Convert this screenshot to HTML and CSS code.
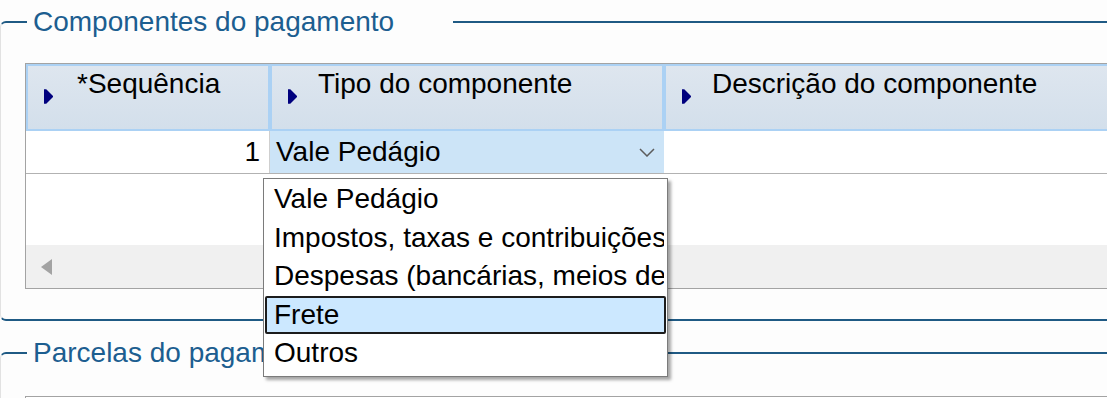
FILE: index.html
```html
<!DOCTYPE html>
<html lang="pt-BR">
<head>
  <meta charset="UTF-8" />
  <title>Componentes do pagamento</title>
  <link rel="stylesheet" href="styles.css">
</head>
<body>
  <div class="page">

    <fieldset class="group">
      <legend>Componentes do pagamento</legend>
      <div class="grid">
        <div class="grid-head">
          <div class="hcell">
            <svg class="sort" viewBox="0 0 8 13"><polygon points="0,0 2,0 8,6 8,7 2,13 0,13"/></svg>
            <span>*Sequência</span>
          </div>
          <div class="hcell">
            <svg class="sort" viewBox="0 0 8 13"><polygon points="0,0 2,0 8,6 8,7 2,13 0,13"/></svg>
            <span class="hleft">Tipo do componente</span>
          </div>
          <div class="hcell">
            <svg class="sort" viewBox="0 0 8 13"><polygon points="0,0 2,0 8,6 8,7 2,13 0,13"/></svg>
            <span class="hleft">Descrição do componente</span>
          </div>
        </div>
        <div class="grid-row">
          <div class="dcell num">1</div>
          <div class="dcell pick">
            <span>Vale Pedágio</span>
            <svg class="chev" viewBox="0 0 16 9"><polyline points="1,1 8,8 15,1"/></svg>
          </div>
          <div class="dcell"></div>
        </div>
        <div class="grid-empty"></div>
        <div class="hscroll"><span class="arrow-left"></span></div>
      </div>
    </fieldset>

    <fieldset class="group second">
      <legend>Parcelas do pagamento</legend>
      <div class="grid stub"></div>
    </fieldset>

    <!-- open list of the "Tipo do componente" select -->
    <ul class="dropdown">
      <li>Vale Pedágio</li>
      <li>Impostos, taxas e contribuições</li>
      <li>Despesas (bancárias, meios de pagamento, outras)</li>
      <li class="active">Frete</li>
      <li>Outros</li>
    </ul>

  </div>
</body>
</html>
```

FILE: styles.css
```css
html, body {
  margin: 0; padding: 0;
  background: #fdfdfd;
  font-family: 'Liberation Sans', Arial, sans-serif;
  color: #000;
  overflow: hidden;
}
.page {
  position: relative;
  height: 398px;
  padding-top: 6px;
  box-sizing: border-box;
}
.group {
  margin: 0 -60px 0 0;
  padding: 25px 0 30px 24px;
  border: 2px solid #1f5a84;
  border-left: 1px solid #e2e2e2;
  border-right: none;
  border-radius: 6px 0 0 6px;
}
.group legend {
  margin-left: 2px;
  padding: 0 59px 0 6px;
  font-size: 28px;
  line-height: 32px;
  color: #1c5e90;
}
.group.second {
  margin-top: 16px;
  padding-top: 27px;
}
.grid {
  width: 1160px;
  border: 1px solid #a3a3a3;
  border-right: none;
  background: #fff;
}
.grid.stub {
  height: 20px;
  border-bottom: none;
}
.grid-head, .grid-row {
  display: grid;
  grid-template-columns: 244px 394px 1fr;
}
.hcell {
  box-sizing: border-box;
  height: 67px;
  border: 2px solid #abd1f4;
  background: linear-gradient(#dee6ef, #d3dfeb);
  padding: 2px 0 0 16px;
  display: flex;
  align-items: flex-start;
  font-size: 28px;
  line-height: 32px;
}
.hcell .sort {
  width: 9px;
  height: 15px;
  margin: 21px 24px 0 0;
  fill: #00007e;
  flex-shrink: 0;
}
.hcell .hleft { margin-left: -3px; }
.grid-row {
  height: 43px;
  box-sizing: border-box;
  border-bottom: 1px solid #b2b2b2;
}
.dcell {
  font-size: 28px;
  line-height: 42px;
  white-space: nowrap;
}
.dcell.num {
  text-align: right;
  padding-right: 9px;
  border-right: 1px solid #cfcfcf;
}
.dcell.pick {
  background: #cce4f7;
  padding: 0 9px 0 6px;
  display: flex;
  align-items: center;
  justify-content: space-between;
}
.chev {
  width: 16px;
  height: 9px;
  fill: none;
  stroke: #5c5c5c;
  stroke-width: 1.5;
}
.grid-empty {
  height: 71px;
}
.hscroll {
  height: 43px;
  background: #f0f0f0;
  display: flex;
  align-items: center;
  padding-left: 15px;
}
.arrow-left {
  width: 0; height: 0;
  border-top: 8px solid transparent;
  border-bottom: 8px solid transparent;
  border-right: 11px solid #a3a3a3;
}
.dropdown {
  position: absolute;
  left: 263px;
  top: 178px;
  width: 405px;
  box-sizing: border-box;
  margin: 0;
  padding: 1px 1px 3px 1px;
  list-style: none;
  background: #fff;
  border: 1px solid #7b7b7b;
  box-shadow: 3px 3px 3px rgba(0, 0, 0, 0.35);
  z-index: 10;
}
.dropdown li {
  height: 38.5px;
  box-sizing: border-box;
  padding-left: 7px;
  border: 2px solid transparent;
  font-size: 28px;
  line-height: 34.5px;
  white-space: nowrap;
  overflow: hidden;
}
.dropdown li.active {
  background: #cce8ff;
  border-color: #1c1c1c;
  border-radius: 2px;
}
```
